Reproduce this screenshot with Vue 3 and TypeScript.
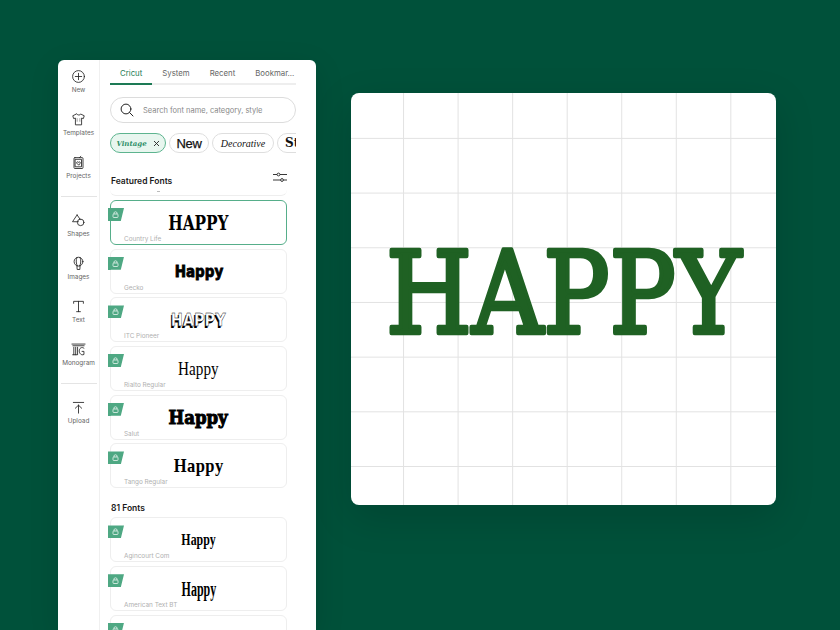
<script setup lang="ts">
interface NavItem {
  label: string
  icon: string
  divider?: boolean
}

interface FontCard {
  name: string
  sample: string
  style: string
  selected?: boolean
}

const tabs = ['Cricut', 'System', 'Recent', 'Bookmar...']

const navItems: NavItem[] = [
  { label: 'New', icon: 'new' },
  { label: 'Templates', icon: 'templates' },
  { label: 'Projects', icon: 'projects', divider: true },
  { label: 'Shapes', icon: 'shapes' },
  { label: 'Images', icon: 'images' },
  { label: 'Text', icon: 'text' },
  { label: 'Monogram', icon: 'monogram', divider: true },
  { label: 'Upload', icon: 'upload' },
]

const featuredFonts: FontCard[] = [
  { name: 'Country Life', sample: 'HAPPY', style: 'country', selected: true },
  { name: 'Gecko', sample: 'Happy', style: 'gecko' },
  { name: 'ITC Pioneer', sample: 'HAPPY', style: 'pioneer' },
  { name: 'Rialto Regular', sample: 'Happy', style: 'rialto' },
  { name: 'Salut', sample: 'Happy', style: 'salut' },
  { name: 'Tango Regular', sample: 'Happy', style: 'tango' },
]

const allFonts: FontCard[] = [
  { name: 'Agincourt Com', sample: 'Happy', style: 'agincourt' },
  { name: 'American Text BT', sample: 'Happy', style: 'american' },
  { name: '', sample: '', style: '' },
]
</script>

<template>
  <main class="stage">
    <section class="panel">
      <nav class="rail">
        <template v-for="item in navItems" :key="item.label">
          <a class="rail-item">
            <svg class="rail-icon" viewBox="0 0 16 16" fill="none" stroke="#222" stroke-width="0.9" stroke-linejoin="round" stroke-linecap="round">
              <template v-if="item.icon === 'new'">
                <circle cx="8" cy="8" r="6.3" />
                <path d="M8 4.6v6.8M4.6 8h6.8" />
              </template>
              <template v-else-if="item.icon === 'templates'">
                <path d="M5.6 2.2 1.9 4l.9 3 1.9-.5v7.2h6.6V6.5l1.900.5.9-3-3.700-1.800c-.5 1.400-3.700 1.400-4.300 0Z" />
                <path d="M6.5 7.5h.1M9.4 7.5h.1M6.5 9.5h.1M9.4 9.5h.1" />
              </template>
              <template v-else-if="item.icon === 'projects'">
                <rect x="3.2" y="2.8" width="9.6" height="11.600" rx="1" />
                <rect x="4.8" y="4.6" width="6.4" height="8" />
                <path d="M9 2.8 10.5 1.4M8 10.6 6.2 8.8c-.8-1 .7-2.2 1.800-1 1.100-1.200 2.600 0 1.800 1Z" />
              </template>
              <template v-else-if="item.icon === 'shapes'">
                <path d="M6.5 2 1.6 9.3h6.2" />
                <path d="M6.5 2 10 7.2" />
                <circle cx="10.3" cy="10" r="3.5" />
              </template>
              <template v-else-if="item.icon === 'images'">
                <circle cx="8" cy="6" r="4.7" />
                <path d="M6.3 1.6C5 5 5.5 8 6.7 10.6M9.7 1.6C11 5 10.5 8 9.3 10.6M6.3 10.7 6.6 14.4H9.4L9.700 10.700" />
              </template>
              <template v-else-if="item.icon === 'text'">
                <path d="M2.800 4.600V2.500h10.400v2.100M8 2.500v11M6 13.500h4" />
              </template>
              <template v-else-if="item.icon === 'monogram'">
                <path d="M1 2.200h14M2 4h12M3 5.600v8M5 5.600v8M1.800 13.600h4.200M7 5.600v8M13.800 6.600C11 4.500 8.800 7 8.800 9.600s2.300 5 5 3.700V10h-2" />
              </template>
              <template v-else>
                <path d="M2.500 2.600h11M8 14V5.500M4.600 8.800 8 5.500l3.400 3.300" />
              </template>
            </svg>
            <span>{{ item.label }}</span>
          </a>
          <hr v-if="item.divider" class="rail-divider" />
        </template>
      </nav>

      <div class="browser">
        <div class="tabs">
          <span v-for="(tab, index) in tabs" :key="tab" class="tab" :class="{ 'tab--active': index === 0 }">{{ tab }}</span>
        </div>

        <div class="search">
          <svg width="14" height="14" viewBox="0 0 14 14" fill="none" stroke="#222" stroke-width="1" stroke-linecap="round">
            <circle cx="6" cy="6" r="4.9" />
            <path d="M9.6 9.6 13 13" />
          </svg>
          <span>Search font name, category, style</span>
        </div>

        <div class="chips">
          <span class="chip chip--active">
            <em class="chip-vintage">Vintage</em>
            <svg width="7" height="7" viewBox="0 0 7 7" stroke="#222" stroke-width="0.9"><path d="M1 1l5 5M6 1 1 6" /></svg>
          </span>
          <span class="chip chip-new">New</span>
          <span class="chip chip-decorative">Decorative</span>
          <span class="chip chip-st">St</span>
        </div>

        <div class="section-head">
          <h2>Featured Fonts</h2>
          <svg width="14" height="11" viewBox="0 0 14 11" fill="none" stroke="#222" stroke-width="0.9">
            <path d="M0 2.5h4M7 2.5h7M0 8h7.5M10.5 8H14" />
            <circle cx="5.5" cy="2.5" r="1.4" />
            <circle cx="9" cy="8" r="1.4" />
          </svg>
        </div>

        <div class="scrolled-card"></div>

        <ul class="font-list">
          <li v-for="font in featuredFonts" :key="font.name" class="font-card" :class="{ 'font-card--selected': font.selected }">
            <i class="flag">
              <svg width="7" height="7" viewBox="0 0 7 7" fill="none" stroke="#fff" stroke-width="0.7"><rect x="1" y="3" width="5" height="3.5" rx="0.8" /><path d="M2 3V1.9C2 .4 5 .4 5 1.9V3" /></svg>
            </i>
            <span class="sample" :class="`sample--${font.style}`">{{ font.sample }}</span>
            <span class="font-name">{{ font.name }}</span>
          </li>
        </ul>

        <h2 class="count">81 Fonts</h2>

        <ul class="font-list">
          <li v-for="(font, index) in allFonts" :key="index" class="font-card">
            <i class="flag">
              <svg width="7" height="7" viewBox="0 0 7 7" fill="none" stroke="#fff" stroke-width="0.7"><rect x="1" y="3" width="5" height="3.5" rx="0.8" /><path d="M2 3V1.9C2 .4 5 .4 5 1.9V3" /></svg>
            </i>
            <span class="sample" :class="`sample--${font.style}`">{{ font.sample }}</span>
            <span class="font-name">{{ font.name }}</span>
          </li>
        </ul>
      </div>
    </section>

    <section class="canvas">
      <svg class="canvas-art" width="425" height="412" viewBox="0 0 425 412">
        <text class="canvas-text" x="35" y="240" textLength="355" lengthAdjust="spacingAndGlyphs">HAPPY</text>
      </svg>
    </section>
  </main>
</template>

<style>
html,
body {
  margin: 0;
  overflow: hidden;
  background: #00513a;
}
</style>

<style scoped>
.stage {
  width: 840px;
  height: 630px;
  box-sizing: border-box;
  padding: 60px 0 0 58px;
  display: flex;
  align-items: flex-start;
  gap: 35px;
  overflow: hidden;
  background: #00513a;
  font-family: Inter, "Noto Sans", sans-serif;
}

.panel {
  width: 258px;
  height: 570px;
  flex-shrink: 0;
  display: flex;
  background: #fff;
  border-radius: 6px 6px 0 0;
  overflow: hidden;
  box-shadow: 0 8px 30px rgba(0, 0, 0, 0.12);
}

.rail {
  width: 42px;
  flex-shrink: 0;
  box-sizing: border-box;
  padding-top: 9px;
  border-right: 1px solid #f0f0f0;
  display: flex;
  flex-direction: column;
  align-items: center;
}

.rail-item {
  height: 43px;
  width: 100%;
  flex-shrink: 0;
  display: flex;
  flex-direction: column;
  align-items: center;
  gap: 2px;
  font-size: 6.4px;
  line-height: 8px;
  color: #666;
  white-space: nowrap;
}

.rail-icon {
  width: 15px;
  height: 15px;
}

.rail-divider {
  width: 36px;
  height: 1px;
  flex-shrink: 0;
  margin: -2px 0 16px;
  border: 0;
  background: #e4e4e4;
}

.browser {
  flex: 1;
  min-width: 0;
  padding: 0 29px 0 10px;
}

.tabs {
  display: flex;
  height: 25px;
  margin-right: -9px;
  box-sizing: border-box;
  border-bottom: 2px solid #eee;
}

.tab {
  padding: 8px 10px 0;
  margin-bottom: -2px;
  font-size: 7.8px;
  line-height: 10px;
  color: #666;
  white-space: nowrap;
}

.tab--active {
  color: #1d7a55;
  border-bottom: 2px solid #1d7a55;
}

.search {
  height: 26px;
  margin: 12px -9px 0 0;
  padding-left: 9px;
  box-sizing: border-box;
  display: flex;
  align-items: center;
  gap: 9px;
  border: 1px solid #dcdcdc;
  border-radius: 13px;
  font-size: 7.5px;
  color: #888;
  white-space: nowrap;
}

.chips {
  display: flex;
  gap: 3px;
  height: 20px;
  margin: 10px -9px 0 0;
  overflow: hidden;
}

.chip {
  height: 20px;
  box-sizing: border-box;
  flex-shrink: 0;
  display: flex;
  align-items: center;
  justify-content: center;
  border: 1px solid #dedede;
  border-radius: 10px;
  color: #111;
  white-space: nowrap;
}

.chip--active {
  width: 56px;
  gap: 6px;
  background: #e8f6ef;
  border-color: #5db48f;
}

.chip-vintage {
  font-family: "DejaVu Serif", serif;
  font-size: 7px;
  font-weight: 700;
  color: #2f8f68;
}

.chip-new {
  width: 40px;
  font-family: "Liberation Sans", sans-serif;
  font-size: 13px;
  letter-spacing: -0.3px;
  -webkit-text-stroke: 0.25px #111;
}

.chip-decorative {
  width: 62px;
  font-family: "Liberation Serif", serif;
  font-size: 10px;
  font-style: italic;
}

.chip-st {
  width: 50px;
  justify-content: flex-start;
  padding-left: 7px;
  font-family: "DejaVu Serif", serif;
  font-size: 12px;
  font-weight: 700;
}

.section-head {
  display: flex;
  justify-content: space-between;
  align-items: flex-start;
  height: 13px;
  margin-top: 19px;
}

.section-head h2,
.count {
  margin: 0;
  padding-left: 1px;
  font-size: 8.5px;
  line-height: 11px;
  font-weight: 600;
  color: #1a1a1a;
}

.section-head h2 {
  padding-top: 4px;
}

.scrolled-card {
  position: relative;
  height: 9px;
  margin-top: 1px;
  border-bottom: 1px solid #eee;
  border-radius: 0 0 6px 6px;
}

.scrolled-card::before {
  content: "";
  position: absolute;
  left: 47px;
  top: 5px;
  width: 3px;
  height: 1px;
  background: #bbb;
}

.font-list {
  list-style: none;
  margin: 4px 0 0;
  padding: 0;
  display: flex;
  flex-direction: column;
  gap: 3.7px;
}

.font-card {
  position: relative;
  height: 45px;
  flex-shrink: 0;
  box-sizing: border-box;
  display: flex;
  justify-content: center;
  padding-top: 10px;
  border: 1px solid #eee;
  border-radius: 6px;
  background: #fff;
}

.font-card--selected {
  border: 1.5px solid #56ae8a;
}

.flag {
  position: absolute;
  top: 7px;
  left: -3px;
  width: 16px;
  height: 13px;
  display: flex;
  align-items: center;
  justify-content: center;
  padding-right: 2px;
  box-sizing: border-box;
  background: #4ea883;
  clip-path: polygon(0 0, 100% 0, 80% 100%, 18% 100%, 10% 115%, 0 100%);
}

.font-name {
  position: absolute;
  left: 13px;
  bottom: 1px;
  font-size: 6.4px;
  line-height: 8px;
  color: #b0b0b0;
}

.sample {
  display: inline-block;
  height: 24px;
  line-height: 24px;
  color: #000;
  white-space: nowrap;
}

.sample--country {
  font-family: "DejaVu Serif", serif;
  font-size: 21px;
  font-weight: 700;
  transform: scaleX(0.73);
}

.sample--gecko {
  font-family: "DejaVu Sans", sans-serif;
  font-size: 15px;
  font-weight: 700;
  -webkit-text-stroke: 0.8px #000;
  transform: scaleX(0.9);
}

.sample--pioneer {
  font-family: "DejaVu Sans", sans-serif;
  font-size: 18px;
  font-weight: 700;
  color: #fff;
  -webkit-text-stroke: 0.4px #000;
  text-shadow: -1.5px 1.5px 0 #000;
  transform: scaleX(0.8);
}

.sample--rialto {
  font-family: "Liberation Serif", serif;
  font-size: 19px;
  transform: scaleX(0.8);
}

.sample--salut {
  font-family: "DejaVu Serif", serif;
  font-size: 18px;
  font-weight: 700;
  -webkit-text-stroke: 1px #000;
  transform: scaleX(0.92);
}

.sample--tango {
  font-family: "Liberation Serif", serif;
  font-size: 19px;
  font-weight: 700;
  letter-spacing: 0.5px;
  transform: scaleX(0.87);
}

.sample--agincourt {
  font-family: "Liberation Serif", serif;
  font-size: 17px;
  font-weight: 700;
  transform: scaleX(0.7);
}

.sample--american {
  font-family: "Liberation Serif", serif;
  font-size: 20px;
  font-weight: 700;
  transform: scaleX(0.6);
}

.count {
  margin-top: 15px;
}

.count + .font-list {
  margin-top: 3px;
}

.canvas {
  width: 425px;
  height: 412px;
  flex-shrink: 0;
  margin-top: 33px;
  overflow: hidden;
  border-radius: 8px;
  background-color: #fff;
  background-image: linear-gradient(to right, #e2e2e2 1px, transparent 1px), linear-gradient(to bottom, #e2e2e2 1px, transparent 1px);
  background-size: 54.56px 54.7px;
  background-position: -2.5px -9.8px;
  box-shadow: 0 12px 40px rgba(0, 0, 0, 0.14);
}

.canvas-art {
  display: block;
}

.canvas-text {
  font-family: "DejaVu Serif", serif;
  font-size: 114px;
  fill: #1f6123;
  stroke: #1f6123;
  stroke-width: 4.5px;
  stroke-linejoin: round;
}
</style>
